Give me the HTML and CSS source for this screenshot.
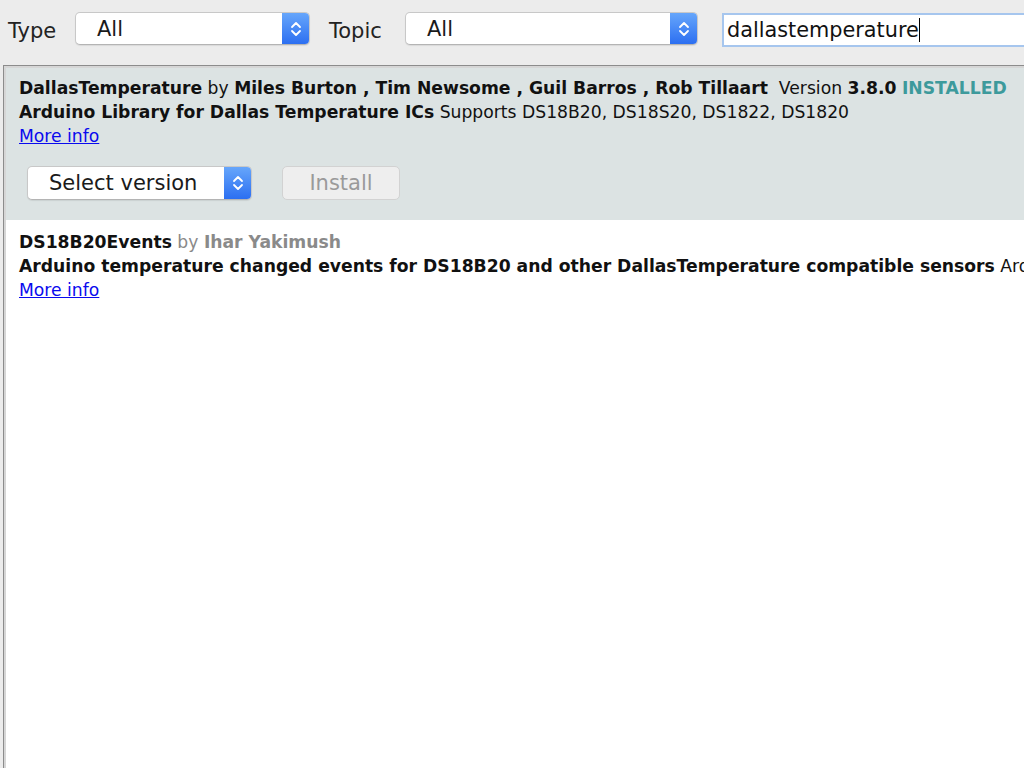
FILE: index.html
```html
<!DOCTYPE html>
<html lang="en">
<head>
    <meta charset="UTF-8">
    <title>Library Manager</title>
    <link rel="stylesheet" href="styles.css">
</head>
<body>

<!-- Filter bar -->
<div class="filters">
    <span class="label">Type</span>
    <div class="select type-select">
        <span class="select-text">All</span>
        <span class="select-arrows">
            <svg width="12" height="20" viewBox="0 0 12 20"><path d="M2 8 L6 4 L10 8 M2 12 L6 16 L10 12" fill="none" stroke="#fff" stroke-width="1.8" stroke-linecap="round" stroke-linejoin="round"/></svg>
        </span>
    </div>
    <span class="label topic-label">Topic</span>
    <div class="select topic-select">
        <span class="select-text">All</span>
        <span class="select-arrows">
            <svg width="12" height="20" viewBox="0 0 12 20"><path d="M2 8 L6 4 L10 8 M2 12 L6 16 L10 12" fill="none" stroke="#fff" stroke-width="1.8" stroke-linecap="round" stroke-linejoin="round"/></svg>
        </span>
    </div>
    <div class="search">dallastemperature<span class="caret"></span></div>
</div>

<!-- Library list -->
<div class="list">
    <div class="item selected">
        <div class="line"><b>DallasTemperature</b> by <b>Miles Burton , Tim Newsome , Guil Barros , Rob Tillaart</b>&nbsp; Version <b>3.8.0</b> <b class="installed">INSTALLED</b></div>
        <div class="line"><b>Arduino Library for Dallas Temperature ICs</b> Supports DS18B20, DS18S20, DS1822, DS1820</div>
        <div class="line"><a href="#">More info</a></div>
        <div class="actions">
            <div class="select version-select">
                <span class="select-text">Select version</span>
                <span class="select-arrows">
                    <svg width="12" height="20" viewBox="0 0 12 20"><path d="M2 8 L6 4 L10 8 M2 12 L6 16 L10 12" fill="none" stroke="#fff" stroke-width="1.8" stroke-linecap="round" stroke-linejoin="round"/></svg>
                </span>
            </div>
            <button class="install" disabled>Install</button>
        </div>
    </div>
    <div class="item">
        <div class="line"><b>DS18B20Events</b> <span class="muted">by <b>Ihar Yakimush</b></span></div>
        <div class="line"><b>Arduino temperature changed events for DS18B20 and other DallasTemperature compatible sensors</b> Ard</div>
        <div class="line"><a href="#">More info</a></div>
    </div>
</div>

</body>
</html>
```

FILE: styles.css
```css
/* Reset */
* {
    margin: 0;
    padding: 0;
    box-sizing: border-box;
}

body {
    width: 1024px;
    height: 768px;
    overflow: hidden;
    background-color: #ececec;
    font-family: "DejaVu Sans", Verdana, sans-serif;
    color: #111;
}

/* Filter bar */
.filters {
    display: flex;
    align-items: flex-start;
    height: 65px;
    padding: 12px 0 0 8px;
    font-size: 21px;
    white-space: nowrap;
}

.filters > * {
    flex-shrink: 0;
}

.label {
    width: 52px;
    color: #222;
    line-height: 38px;
    margin-right: 15px;
}

.topic-label {
    width: 56px;
    margin-left: 19px;
    margin-right: 20px;
}

.select {
    display: flex;
    align-items: stretch;
    height: 33px;
    background-color: #fff;
    border: 1px solid #c8c8c8;
    border-bottom-color: #b4b4b4;
    border-radius: 5px;
    box-shadow: 0 1px 1px rgba(0, 0, 0, 0.08);
    overflow: hidden;
}

.select-text {
    flex: 1;
    display: flex;
    align-items: center;
    padding-left: 21px;
    color: #1a1a1a;
}

.select-arrows {
    width: 27px;
    display: flex;
    align-items: center;
    justify-content: center;
    background: linear-gradient(#66a6fb, #2c6ff1);
}

.type-select {
    width: 235px;
}

.topic-select {
    width: 293px;
}

.search {
    display: flex;
    align-items: center;
    margin-left: 24px;
    margin-top: 1px;
    width: 330px;
    height: 34px;
    padding-left: 3px;
    background-color: #fff;
    border: 2px solid #a6c6ee;
    color: #111;
    font-size: 20.8px;
}

.caret {
    display: inline-block;
    width: 1px;
    height: 24px;
    background-color: #000;
}

/* Library list */
.list {
    margin-left: 3px;
    height: 703px;
    border-left: 1px solid #8c8c8c;
    border-top: 1px solid #8c8c8c;
    background-color: #fff;
    box-shadow: inset 2px 2px 0 #d6d6d6;
    padding: 2px 0 0 2px;
    font-size: 17.2px;
}

.item {
    padding: 10px 0 6px 13px;
    white-space: nowrap;
    overflow: hidden;
}

.item.selected {
    background-color: #dce3e3;
    height: 152px;
    padding-top: 8px;
}

.line {
    height: 24px;
    line-height: 24px;
}

.installed {
    color: #3d9a9c;
}

.muted {
    color: #8a8a8a;
}

a {
    color: #0a0aee;
    text-decoration: underline;
}

.actions {
    display: flex;
    align-items: center;
    gap: 30px;
    margin-top: 18px;
    margin-left: 8px;
    font-size: 21px;
}

.version-select {
    width: 225px;
    height: 34px;
}

.install {
    width: 118px;
    height: 34px;
    font-family: inherit;
    font-size: 21px;
    color: #9a9a9a;
    background-color: #eeeeee;
    border: 1px solid #d2d2d2;
    border-radius: 5px;
}
```
